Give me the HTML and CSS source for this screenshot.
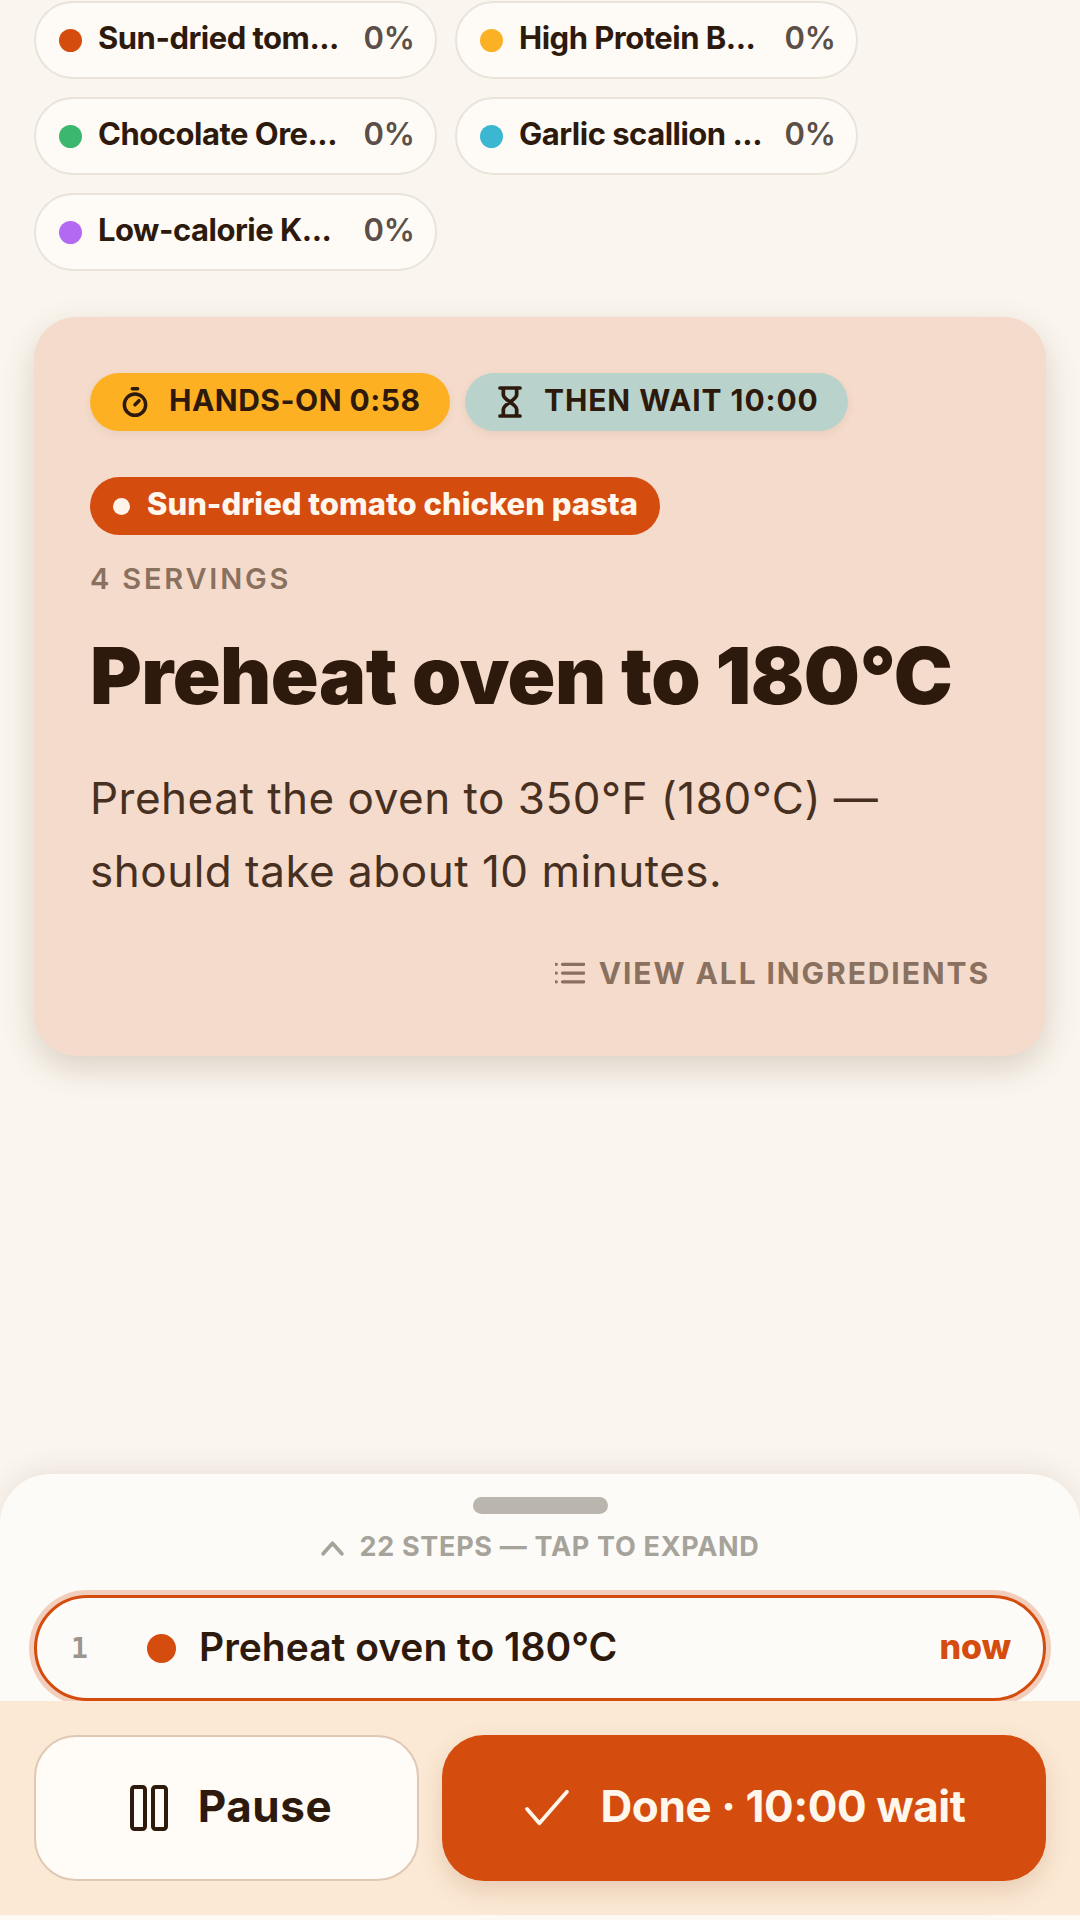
FILE: index.html
```html
<!DOCTYPE html>
<html lang="en">
<head>
<meta charset="utf-8">
<title>Cooking</title>
<link rel="stylesheet" href="styles.css">
</head>
<body>
<main class="page">
  <section class="chips">
    <div class="chip"><span class="dot tomato"></span><span class="chip-name">Sun-dried tom...</span><span class="chip-pct">0%</span></div>
    <div class="chip"><span class="dot amber"></span><span class="chip-name">High Protein B...</span><span class="chip-pct">0%</span></div>
    <div class="chip"><span class="dot green"></span><span class="chip-name">Chocolate Ore...</span><span class="chip-pct">0%</span></div>
    <div class="chip"><span class="dot blue"></span><span class="chip-name">Garlic scallion ...</span><span class="chip-pct">0%</span></div>
    <div class="chip"><span class="dot purple"></span><span class="chip-name">Low-calorie K...</span><span class="chip-pct">0%</span></div>
  </section>
  <section class="card">
    <div class="timers">
      <div class="pill pill-amber">
        <svg class="pill-icon" viewBox="0 0 24 24" fill="none" stroke="currentColor" stroke-width="2.6" stroke-linecap="round" stroke-linejoin="round"><path d="M10 2h4"/><circle cx="12" cy="14" r="8"/><path d="M12 14l3-3"/></svg>
        <span class="pill-text">HANDS-ON 0:58</span>
      </div>
      <div class="pill pill-teal">
        <svg class="pill-icon" viewBox="0 0 24 24" fill="none" stroke="currentColor" stroke-width="2.8" stroke-linecap="round" stroke-linejoin="round"><path d="M4.500 1.500h15M4.500 22.500h15M7 1.500v5c0 2 5 5.500 5 5.500s5-3.500 5-5.500v-5M7 22.500v-5c0-2 5-5.500 5-5.500s5 3.500 5 5.500v5"/></svg>
        <span class="pill-text">THEN WAIT 10:00</span>
      </div>
    </div>
    <div class="recipe-tag"><span class="recipe-dot"></span><span class="tag-text">Sun-dried tomato chicken pasta</span></div>
    <div class="servings">4 SERVINGS</div>
    <h1 class="title">Preheat oven to 180°C</h1>
    <p class="desc">Preheat the oven to 350°F (180°C) — should take about 10 minutes.</p>
    <div class="ingredients">
      <svg class="list-icon" viewBox="0 0 24 24" fill="none" stroke="currentColor" stroke-width="2.600" stroke-linecap="round"><path d="M6 5h17M6 12h17M6 19h17M1 5h.01M1 12h.01M1 19h.01"/></svg>
      <span>VIEW ALL INGREDIENTS</span>
    </div>
  </section>
  <section class="sheet">
    <div class="handle"></div>
    <div class="expand">
      <svg class="chev" viewBox="0 0 24 20" fill="none" stroke="currentColor" stroke-width="3.600" stroke-linecap="round" stroke-linejoin="round"><path d="M3 16l9-10 9 10"/></svg>
      <span>22 STEPS — TAP TO EXPAND</span>
    </div>
    <div class="step">
      <span class="step-num">1</span>
      <span class="step-dot"></span>
      <span class="step-title">Preheat oven to 180°C</span>
      <span class="step-now">now</span>
    </div>
  </section>
  <section class="actions">
    <button class="btn btn-pause">
      <svg class="btn-icon" viewBox="0 0 40 48" fill="none" stroke="currentColor" stroke-width="4" stroke-linejoin="round"><rect x="3" y="3" width="13" height="42" rx="2.500"/><rect x="24" y="3" width="13" height="42" rx="2.500"/></svg>
      <span class="btn-text">Pause</span>
    </button>
    <button class="btn btn-done">
      <svg class="check" viewBox="0 0 48 40" fill="none" stroke="currentColor" stroke-width="4" stroke-linecap="round" stroke-linejoin="round"><path d="M3 21l13 15L45 3"/></svg>
      <span class="btn-text">Done · 10:00 wait</span>
    </button>
  </section>
  <div class="strip"></div>
</main>
</body>
</html>
```
FILE: styles.css
```css
* { box-sizing: border-box; }
html, body { margin: 0; padding: 0; }
body { width: 1080px; height: 1920px; overflow: hidden; background: #faf5ee; font-family: Inter, "Liberation Sans", sans-serif; color: #2d1a0c; }
.page { height: 1920px; display: flex; flex-direction: column; background: #faf5ee; }

.chips { display: grid; grid-template-columns: 403px 403px; gap: 18px 18px; padding: 1px 0 0 34px; }
.chip { height: 78px; display: flex; align-items: center; padding: 0 20px 0 23px; background: #fefbf7; border: 2px solid #e9e3da; border-radius: 39px; }
.dot { width: 23px; height: 23px; border-radius: 50%; flex: none; margin-right: 16px; }
.tomato { background: #d54c0f; }
.amber { background: #fbb125; }
.green { background: #3cb76f; }
.blue { background: #3bb7d2; }
.purple { background: #b469f3; }
.chip-name { flex: 1; font-size: 31px; font-weight: 700; letter-spacing: -0.5px; color: #2d1a0c; white-space: nowrap; margin-top: -5px; }
.chip-pct { font-size: 31px; font-weight: 600; color: #5b4f47; margin-top: -5px; }

.card { margin: 46px 34px 0; height: 739px; background: #f5dbcb; border-radius: 42px; padding: 56px 56px 0; box-shadow: 0 12px 32px rgba(90, 70, 40, 0.2); display: flex; flex-direction: column; align-items: flex-start; }
.timers { display: flex; gap: 15px; }
.pill { height: 58px; border-radius: 29px; display: flex; align-items: center; gap: 18px; font-size: 30px; font-weight: 700; color: #2d1a0c; padding: 0 29px; box-shadow: 0 3px 8px rgba(90, 60, 30, 0.08); }
.pill-text { margin-top: -4px; }
.pill-amber { background: #fdb022; width: 360px; letter-spacing: 0.5px; }
.pill-teal { background: #b9d3cc; width: 383px; letter-spacing: 0.9px; }
.pill-icon { width: 32px; height: 32px; flex: none; }
.recipe-tag { margin-top: 46px; height: 58px; border-radius: 29px; background: #d54c0f; color: #fff6ec; display: flex; align-items: center; gap: 17px; padding: 0 23px; font-size: 31px; font-weight: 800; letter-spacing: 0; width: 570px; white-space: nowrap; }
.tag-text { margin-top: -5px; }
.recipe-dot { width: 17px; height: 17px; border-radius: 50%; background: #fff4ea; flex: none; }
.servings { margin-top: 27px; font-size: 29px; line-height: 34px; font-weight: 600; letter-spacing: 2.8px; color: #8a705f; }
.title { margin: 31px 0 0; font-size: 79px; line-height: 96px; font-weight: 900; letter-spacing: -0.5px; color: #2d1a0c; white-space: nowrap; }
.desc { margin: 39px 0 0; width: 860px; font-size: 44px; line-height: 73px; font-weight: 400; letter-spacing: 0.5px; color: #47301f; }
.ingredients { margin-top: 47px; align-self: flex-end; display: flex; align-items: center; gap: 14px; font-size: 30px; font-weight: 700; letter-spacing: 1.9px; color: #8a705f; }
.list-icon { width: 30px; height: 30px; flex: none; }

.sheet { margin-top: auto; height: 227px; background: #fdfbf7; border-radius: 50px 50px 0 0; box-shadow: 0 -6px 24px rgba(90, 70, 40, 0.09); padding: 23px 34px 0; display: flex; flex-direction: column; align-items: center; }
.handle { width: 135px; height: 17px; border-radius: 9px; background: #bab6ae; flex: none; }
.expand { margin-top: 17px; display: flex; align-items: center; gap: 14px; font-size: 27px; line-height: 32px; font-weight: 700; letter-spacing: 0.7px; color: #a6a39b; }
.chev { width: 25px; height: 21px; flex: none; }
.step { margin-top: 32px; width: 100%; height: 106px; flex: none; display: flex; align-items: center; padding: 0 32px 0 34px; background: #fdfbf7; border: 3px solid #d54c0f; border-radius: 53px; box-shadow: 0 0 0 5px rgba(213, 76, 15, 0.25); }
.step-num { width: 76px; font-family: "DejaVu Sans Mono", monospace; font-size: 28px; font-weight: 700; color: #9a958d; }
.step-dot { width: 29px; height: 29px; border-radius: 50%; background: #d54c0f; flex: none; margin-right: 23px; }
.step-title { flex: 1; font-size: 39px; font-weight: 600; letter-spacing: 0; color: #2d1a0c; margin-top: -3px; }
.step-now { font-size: 34px; font-weight: 800; color: #d54c0f; margin-top: -3px; }

.actions { flex: none; height: 214px; background: #fbe9d5; display: flex; gap: 23px; padding: 34px 34px 0; }
.btn { height: 146px; border-radius: 42px; display: flex; align-items: center; justify-content: center; font-family: inherit; font-size: 44px; font-weight: 700; }
.btn-text { margin-top: -5px; }
.btn-pause { width: 385px; gap: 29px; padding: 0 0 0 8px; background: #fffbf6; border: 2px solid #dfc9b5; color: #2d1a0c; letter-spacing: 0.6px; }
.btn-icon { width: 40px; height: 48px; flex: none; }
.btn-done { flex: 1; gap: 30px; padding: 0 0 0 2px; background: #d54c0f; border: 0; color: #fff6ec; letter-spacing: -0.4px; box-shadow: 0 10px 24px rgba(150, 70, 20, 0.18); }
.check { width: 46px; height: 38px; flex: none; }
.strip { flex: none; height: 5px; background: #fdfaf6; }
```
